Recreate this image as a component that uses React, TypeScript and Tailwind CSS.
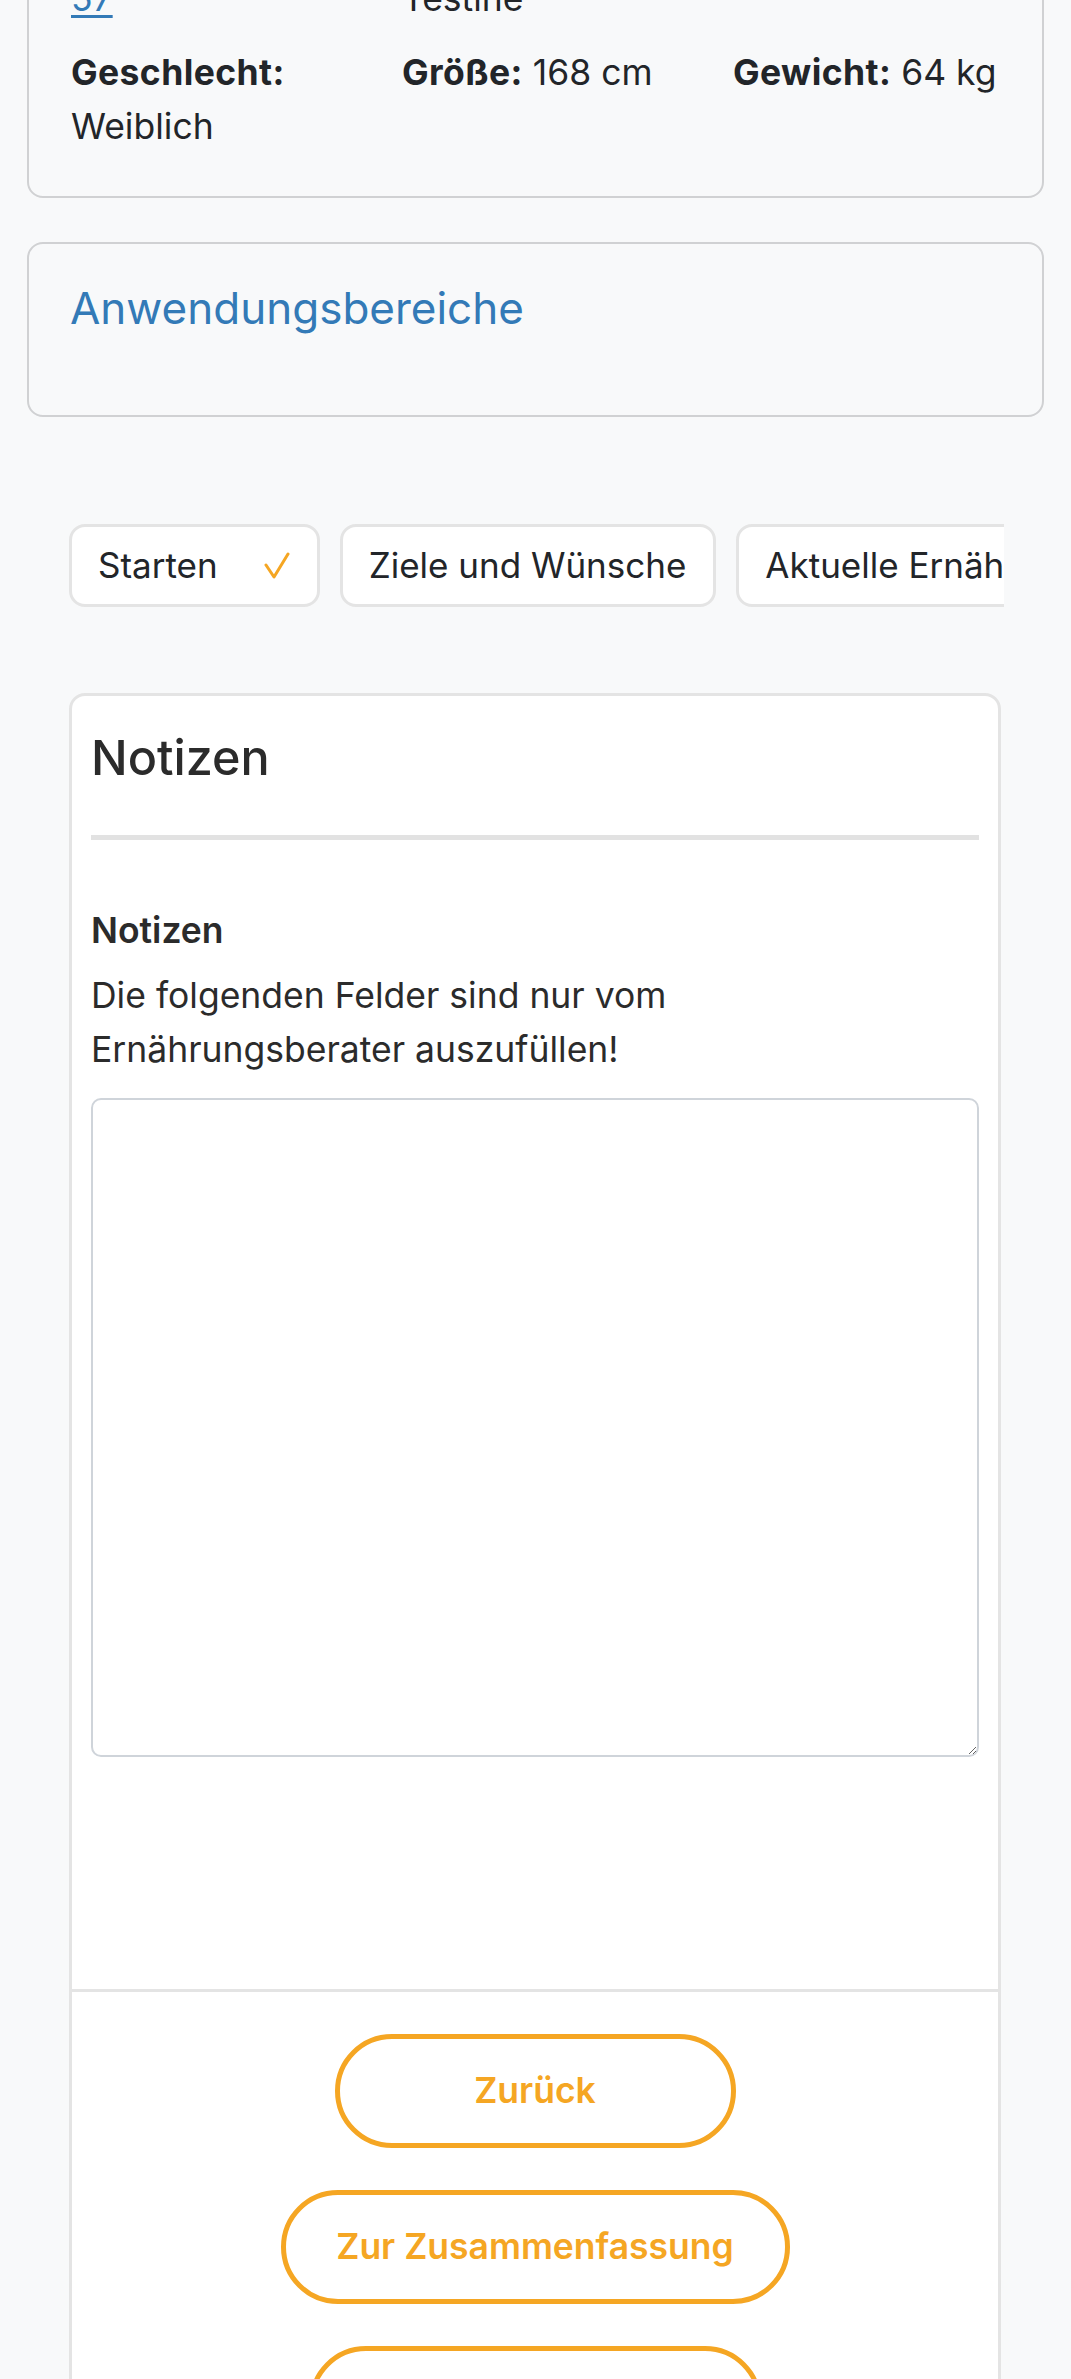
import React from 'react';

type Tab = { label: string; done?: boolean };

const tabs: Tab[] = [
  { label: 'Starten', done: true },
  { label: 'Ziele und Wünsche' },
  { label: 'Aktuelle Ernährung' },
  { label: 'Bewegung' },
];

const CheckMark = () => (
  <svg width="26" height="28" viewBox="0 0 26 28" fill="none">
    <polyline
      points="2,13 10,25 24,2"
      stroke="#f5a623"
      strokeWidth="3"
      strokeLinecap="round"
      strokeLinejoin="round"
    />
  </svg>
);

const App: React.FC = () => {
  return (
    <div className="min-h-screen bg-[#f8f9fa] font-['Inter',sans-serif] text-[#222529] overflow-hidden">
      <div className="px-[27px]">
        {/* client details */}
        <div className="-mt-[126px] rounded-[16px] border-2 border-[#d0d1d3] px-[42px] py-[42px]">
          <div className="grid grid-cols-3 gap-x-[64px] gap-y-[20px] text-[35.5px] leading-[54px]">
            <div>
              <div className="font-bold">Kunden-Nr.:</div>
              <a href="#" className="text-[#337ab7] underline underline-offset-4">
                57
              </a>
            </div>
            <div>
              <div className="font-bold">Nachname:</div>
              <div>Testine</div>
            </div>
            <div />
            <div>
              <span className="font-bold tracking-[0.4px]">Geschlecht:</span> Weiblich
            </div>
            <div className="whitespace-nowrap">
              <span className="font-bold tracking-[0.4px]">Größe:</span> 168 cm
            </div>
            <div className="whitespace-nowrap">
              <span className="font-bold tracking-[0.4px]">Gewicht:</span> 64 kg
            </div>
          </div>
        </div>

        <div className="mt-[44px] rounded-[16px] border-2 border-[#d0d1d3] px-[41px] pt-[39px] pb-[82px]">
          <h3 className="text-[44px] leading-[50px] text-[#337ab7]">Anwendungsbereiche</h3>
        </div>
      </div>

      <div className="px-[69px] mt-[107px]">
        {/* step tabs */}
        <div className="flex gap-[20px] overflow-hidden w-[935px]">
          {tabs.map((tab) => (
            <div
              key={tab.label}
              className="shrink-0 h-[83px] flex items-center gap-[46px] pl-[26px] pr-[27px] bg-white border-[3px] border-[#e4e4e4] rounded-[16px] text-[35px] whitespace-nowrap text-[#222529]"
            >
              <span>{tab.label}</span>
              {tab.done && <CheckMark />}
            </div>
          ))}
        </div>

        <div className="mt-[86px] w-[932px] bg-white border-[3px] border-[#e4e4e4] rounded-[16px]">
          <div className="px-[19px] pt-[33px] pb-[232px]">
            <h2 className="text-[48.5px] leading-[58px] font-medium text-[#2b2b2b]">Notizen</h2>
            <div className="mt-[48px] h-[5px] bg-[#e2e2e2]" />

            <div className="mt-[64px] text-[35.5px] leading-[54px] font-semibold text-[#2b2b2b]">Notizen</div>
            <p className="mt-[11px] text-[35.5px] leading-[54px] text-[#2b2b2b]">
              Die folgenden Felder sind nur vom
              <br />
              Ernährungsberater auszufüllen!
            </p>
            <textarea className="mt-[21px] block w-full h-[659px] bg-white border-2 border-[#cfd4da] rounded-[10px] outline-none" />
          </div>

          <div className="border-t-[3px] border-[#e4e4e4] pt-[42px] pb-[80px] flex flex-col items-center gap-[42px]">
            <button className="w-[401px] h-[114px] rounded-full border-[5px] border-[#f5a623] text-[#f5a623] text-[35.5px] font-semibold">
              Zurück
            </button>
            <button className="w-[509px] h-[114px] rounded-full border-[5px] border-[#f5a623] text-[#f5a623] text-[35.5px] font-semibold">
              Zur Zusammenfassung
            </button>
            <button className="w-[453px] h-[114px] rounded-full border-[5px] border-[#f5a623] text-[#f5a623] text-[35.5px] font-semibold">
              Absenden
            </button>
          </div>
        </div>
      </div>
    </div>
  );
};

export default App;
